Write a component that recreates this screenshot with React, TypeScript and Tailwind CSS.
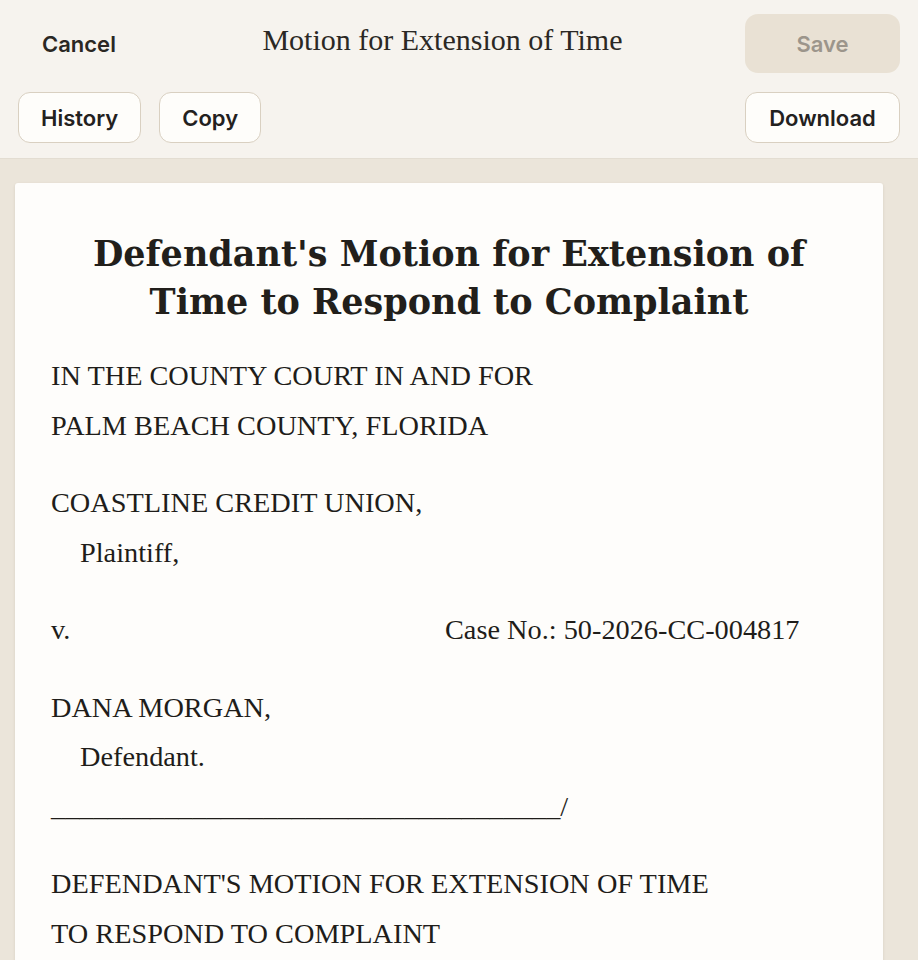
import React from "react";

const sans = { fontFamily: "Inter, 'Noto Sans', sans-serif" };

function Btn({ children, className = "" }: { children: React.ReactNode; className?: string }) {
  return (
    <button
      className={
        "h-[51px] px-[22px] rounded-[12px] border border-[#d9d0c1] bg-[#fefdfa] text-[22px] font-semibold text-[#23211e] leading-none " +
        className
      }
      style={sans}
    >
      {children}
    </button>
  );
}

export default function App() {
  const serif = { fontFamily: "'Liberation Serif', 'Times New Roman', serif" };
  return (
    <div className="min-h-screen w-[918px] bg-[#ebe5da] flex flex-col">
      <header className="bg-[#f6f3ee] border-b border-[#e3ddd2] px-[18px] pt-[14px] pb-[15px]">
        <div className="flex items-center">
          <button
            className="h-[59px] px-[24px] text-[22px] font-semibold text-[#2a2723] leading-none"
            style={sans}
          >
            Cancel
          </button>
          <div className="flex-1 text-center pb-[7px]">
            <span className="text-[30px] text-[#2b2824] leading-none" style={serif}>
              Motion for Extension of Time
            </span>
          </div>
          <button
            className="w-[155px] h-[59px] rounded-[13px] bg-[#e9e1d4] text-[22px] font-semibold text-[#9c958b] leading-none"
            style={sans}
          >
            Save
          </button>
        </div>
        <div className="flex items-center mt-[19px]">
          <Btn>History</Btn>
          <Btn className="ml-[18px]">Copy</Btn>
          <div className="flex-1" />
          <Btn className="w-[155px] px-0">Download</Btn>
        </div>
      </header>
      <main className="flex-1 pt-[24px] pl-[15px] pr-[35px]">
        <div className="bg-[#fefdfb] rounded-[3px] shadow-[0_1px_3px_rgba(80,60,30,0.12)] pt-[47px] px-[36px] pb-[40px] text-[#1f1d1a]">
          <h1
            className="text-center text-[35px] font-bold leading-[48px] text-[#221f1b] mb-[25px]"
            style={{ fontFamily: "'DejaVu Serif', Georgia, serif" }}
          >
            Defendant's Motion for Extension of
            <br />
            Time to Respond to Complaint
          </h1>
          <div className="text-[28.3px] leading-[49.5px]" style={serif}>
            <p className="mb-[28px]">
              IN THE COUNTY COURT IN AND FOR
              <br />
              PALM BEACH COUNTY, FLORIDA
            </p>
            <p className="mb-[28px]">
              COASTLINE CREDIT UNION,
              <br />
              <span className="pl-[29px]">Plaintiff,</span>
            </p>
            <div className="mb-[28px] flex">
              <span className="w-[394px] shrink-0">v.</span>
              <span>Case No.: 50-2026-CC-004817</span>
            </div>
            <p className="mb-[28px]">
              DANA MORGAN,
              <br />
              <span className="pl-[29px]">Defendant.</span>
              <br />
              ____________________________________/
            </p>
            <p className="mb-[28px]">
              DEFENDANT'S MOTION FOR EXTENSION OF TIME
              <br />
              TO RESPOND TO COMPLAINT
            </p>
          </div>
        </div>
      </main>
    </div>
  );
}
